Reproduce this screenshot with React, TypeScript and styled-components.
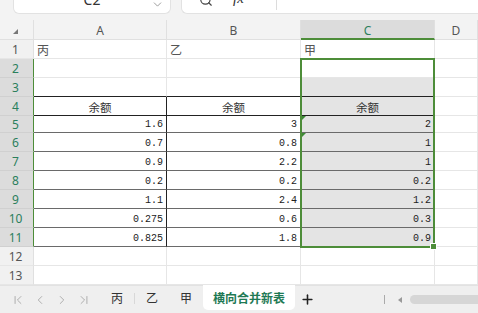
import React from 'react'
import styled, { createGlobalStyle } from 'styled-components';
import { ChevronDown, Search, ChevronFirst, ChevronLeft, ChevronRight, ChevronLast, Plus } from 'lucide-react';

const GlobalStyle = createGlobalStyle`
  html, body { margin: 0; padding: 0; background: #f3f3f3; }
  body { font-family: "Noto Sans", "Noto Sans CJK SC", sans-serif; width: 478px; height: 313px; overflow: hidden; }
`;

const CJK = `"Noto Sans CJK SC", "Noto Sans", sans-serif`;
const GREEN = "#4d8d39";
const GREEN_TEXT = "#2b7f5c";

const Page = styled.div`
  display: flex;
  flex-direction: column;
  width: 478px;
  height: 313px;
  overflow: hidden;
`;

const FormulaBar = styled.div`
  height: 14px;
  display: flex;
  align-items: flex-end;
  gap: 10px;
  padding-left: 13px;
  overflow: hidden;
  flex-shrink: 0;
`;

const NameBox = styled.div`
  width: 158px;
  height: 26px;
  box-sizing: border-box;
  background: #fff;
  border: 1px solid #e2e2e2;
  border-top: none;
  border-radius: 0 0 6px 6px;
  display: flex;
  align-items: center;
  justify-content: center;
  position: relative;
  color: #333;
  font-size: 14px;
  padding-bottom: 2px;
  svg { position: absolute; right: 6px; top: 10px; color: #888; }
`;

const FxBox = styled.div`
  flex: 1;
  height: 26px;
  box-sizing: border-box;
  background: #fff;
  border: 1px solid #e2e2e2;
  border-top: none;
  border-right: none;
  border-radius: 0 0 0 6px;
  display: flex;
  align-items: flex-start;
  padding-left: 17px;
  gap: 20px;
  color: #444;
  svg { margin-top: 5px; }
`;

const FxLabel = styled.span`
  font-family: "Liberation Serif", serif;
  font-style: italic;
  font-size: 15px;
  margin-top: 2px;
  color: #333;
`;

const FxDivider = styled.div`
  width: 1px;
  height: 22px;
  background: #dcdcdc;
  margin-left: 12px;
`;

const SheetWrap = styled.div`
  position: relative;
  margin-top: 6px;
  flex-shrink: 0;
`;

const Grid = styled.div`
  display: grid;
  grid-template-columns: 34px 133px 134px 134px 43px;
  grid-template-rows: 20px 19px 19px 19px 19px 17px 19px 19px 19px 19px 19px 19px 19px 19px;
  background: #fff;
`;

const Corner = styled.div`
  position: relative;
  background: #f3f3f3;
  border-right: 1px solid #e0e0e0;
  border-bottom: 1px solid #e0e0e0;
  &::after {
    content: "";
    position: absolute;
    left: 13px;
    top: 9px;
    border-left: 5px solid transparent;
    border-bottom: 5px solid #777;
  }
`;

const ColHead = styled.div<{ $active?: boolean }>`
  box-sizing: border-box;
  display: flex;
  align-items: center;
  justify-content: center;
  font-size: 12px;
  padding-top: 2px;
  color: ${p => p.$active ? GREEN_TEXT : "#555"};
  background: ${p => p.$active ? "#dcdcdc" : "#f3f3f3"};
  border-right: 1px solid #e0e0e0;
  border-bottom: ${p => p.$active ? `2px solid ${GREEN}` : "1px solid #e0e0e0"};
`;

const RowHead = styled.div<{ $active?: boolean }>`
  box-sizing: border-box;
  display: flex;
  align-items: center;
  justify-content: center;
  font-size: 12px;
  padding-right: 2px;
  color: ${p => p.$active ? GREEN_TEXT : "#555"};
  background: ${p => p.$active ? "#dcdcdc" : "#f1f1f1"};
  border-right: 1px solid ${p => p.$active ? GREEN : "#e0e0e0"};
  border-bottom: 1px solid ${p => p.$active ? "#d0d0d0" : "#e6e6e6"};
`;

type CellProps = {
  $align?: "left" | "center" | "right";
  $shade?: boolean;
  $bottom?: string;
  $right?: string;
  $mono?: boolean;
};

const Cell = styled.div<CellProps>`
  position: relative;
  box-sizing: border-box;
  display: flex;
  align-items: flex-end;
  justify-content: ${p => p.$align === "right" ? "flex-end" : p.$align === "center" ? "center" : "flex-start"};
  padding: 0 3px 1px 3px;
  background: ${p => p.$shade ? "#e4e4e4" : "#fff"};
  border-right: 1px solid ${p => p.$right || "#e6e6e6"};
  border-bottom: 1px solid ${p => p.$bottom || "#e6e6e6"};
  color: ${p => p.$mono ? "#222" : "#555"};
  font-family: ${p => p.$mono ? `"Liberation Mono", monospace` : CJK};
  font-size: ${p => p.$mono ? "10px" : "12px"};
  line-height: ${p => p.$mono ? "13px" : "15px"};
  white-space: nowrap;
`;

const HeaderText = styled.span`
  font-size: 11.5px;
  font-weight: 400;
  color: #333;
  line-height: 14px;
`;

const ErrorMark = styled.div`
  position: absolute;
  left: 1px;
  top: 0;
  border-top: 4px solid #3d8a36;
  border-right: 4px solid transparent;
`;

const Selection = styled.div`
  position: absolute;
  left: 300px;
  top: 38px;
  width: 135px;
  height: 190px;
  box-sizing: border-box;
  border: 2px solid ${GREEN};
  pointer-events: none;
`;

const FillHandle = styled.div`
  position: absolute;
  right: -4px;
  bottom: -4px;
  width: 5px;
  height: 5px;
  background: ${GREEN};
  border: 1px solid #fff;
`;

const TabBar = styled.div`
  flex: 1;
  display: flex;
  align-items: stretch;
  background: #efefef;
  border-top: 1px solid #e2e2e2;
  padding-left: 7px;
  box-sizing: border-box;
`;

const NavButton = styled.div`
  width: 22px;
  display: flex;
  align-items: center;
  justify-content: center;
  color: #a5a5a5;
`;

const Tabs = styled.div`
  display: flex;
  align-items: stretch;
  margin-left: 5px;
`;

const Tab = styled.div<{ $active?: boolean }>`
  position: relative;
  width: ${p => p.$active ? "92px" : "34px"};
  display: flex;
  align-items: center;
  justify-content: center;
  padding-bottom: 1px;
  font-family: ${CJK};
  font-size: 12px;
  font-weight: ${p => p.$active ? 700 : 400};
  color: ${p => p.$active ? "#1f7a55" : "#333"};
  background: ${p => p.$active ? "#fff" : "transparent"};
  border-radius: ${p => p.$active ? "0 0 5px 5px" : "0"};
  margin-top: -1px;
  margin-bottom: 3px;
`;

const TabSep = styled.div`
  width: 1px;
  background: #d8d8d8;
  margin: 7px 0 9px;
`;

const AddTab = styled.div`
  width: 24px;
  display: flex;
  align-items: center;
  justify-content: center;
  color: #222;
`;

const Scroller = styled.div`
  flex: 1;
  display: flex;
  align-items: center;
  justify-content: flex-end;
`;

const ScrollSep = styled.div`
  width: 1px;
  height: 9px;
  background: #aaa;
  margin-right: 13px;
`;

const ScrollArrow = styled.div`
  width: 0;
  height: 0;
  border-top: 3px solid transparent;
  border-bottom: 3px solid transparent;
  border-right: 4px solid #999;
  margin-right: 8px;
`;

const ScrollThumb = styled.div`
  width: 72px;
  height: 9px;
  border-radius: 5px 0 0 5px;
  background: #d6d6d6;
  margin-right: -4px;
`;

const colA = ["1.6", "0.7", "0.9", "0.2", "1.1", "0.275", "0.825"];
const colB = ["3", "0.8", "2.2", "0.2", "2.4", "0.6", "1.8"];
const colC = ["2", "1", "1", "0.2", "1.2", "0.3", "0.9"];

export default function App() {
  const rows: React.ReactNode[] = [];

  for (let r = 1; r <= 13; r++) {
    const active = r >= 2 && r <= 11;
    rows.push(<RowHead key={`h${r}`} $active={active}>{r}</RowHead>);

    for (let c = 0; c < 4; c++) {
      const inTable = c < 3;
      const isC = c === 2;
      let bottom: string | undefined;
      let right: string | undefined;
      if (inTable && (r === 3 || r === 4)) bottom = "#222";
      if (inTable && r >= 5 && r <= 11) bottom = "#6a6a6a";
      if ((c === 0 || c === 1) && r >= 4 && r <= 11) right = "#222";
      const shade = isC && r >= 3 && r <= 11;

      let content: React.ReactNode = null;
      let align: CellProps["$align"] = "left";
      let mono = false;
      if (r === 1 && inTable) content = ["丙", "乙", "甲"][c];
      if (r === 4 && inTable) { content = <HeaderText>余额</HeaderText>; align = "center"; }
      if (r >= 5 && r <= 11 && inTable) {
        content = [colA, colB, colC][c][r - 5];
        align = "right";
        mono = true;
      }
      rows.push(
        <Cell key={`c${r}-${c}`} $align={align} $shade={shade} $bottom={bottom} $right={right} $mono={mono}>
          {isC && (r === 5 || r === 6) && <ErrorMark />}
          {content}
        </Cell>
      );
    }
  }

  return (
    <>
      <GlobalStyle />
      <Page>
        <FormulaBar>
          <NameBox>
            C2
            <ChevronDown size={13} strokeWidth={1.5} />
          </NameBox>
          <FxBox>
            <Search size={14} strokeWidth={2} />
            <FxLabel>fx</FxLabel>
            <FxDivider />
          </FxBox>
        </FormulaBar>

        <SheetWrap>
          <Grid>
            <Corner />
            <ColHead>A</ColHead>
            <ColHead>B</ColHead>
            <ColHead $active>C</ColHead>
            <ColHead>D</ColHead>
            {rows}
          </Grid>
          <Selection>
            <FillHandle />
          </Selection>
        </SheetWrap>

        <TabBar>
          <NavButton><ChevronFirst size={14} strokeWidth={1.5} /></NavButton>
          <NavButton><ChevronLeft size={14} strokeWidth={1.5} /></NavButton>
          <NavButton><ChevronRight size={14} strokeWidth={1.5} /></NavButton>
          <NavButton><ChevronLast size={14} strokeWidth={1.5} /></NavButton>
          <Tabs>
            <Tab>丙</Tab>
            <TabSep />
            <Tab>乙</Tab>
            <Tab>甲</Tab>
            <Tab $active>横向合并新表</Tab>
            <AddTab><Plus size={15} strokeWidth={2.5} /></AddTab>
          </Tabs>
          <Scroller>
            <ScrollSep />
            <ScrollArrow />
            <ScrollThumb />
          </Scroller>
        </TabBar>
      </Page>
    </>
  )
}
